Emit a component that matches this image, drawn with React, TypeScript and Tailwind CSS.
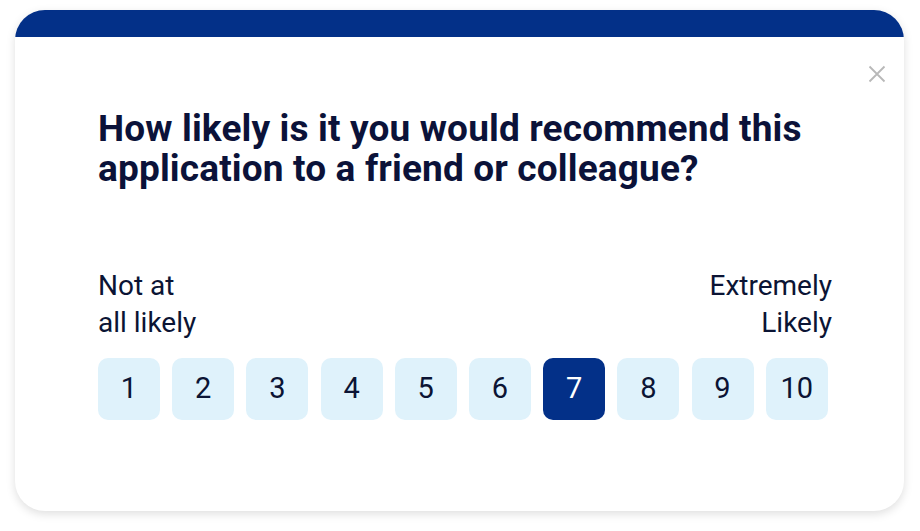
import {useState} from "react";

const scores = [1, 2, 3, 4, 5, 6, 7, 8, 9, 10];

function CloseIcon() {
    return (
        <svg width="18" height="18" viewBox="0 0 18 18" fill="none" stroke="#b8b8b8" strokeWidth="1.8">
            <path d="M1.5 1.5L16.5 16.5M16.5 1.5L1.5 16.5"/>
        </svg>
    );
}

function ScoreButton(props: { value: number, selected: boolean, onSelect: (v: number) => void }) {
    return (
        <button
            onClick={() => props.onSelect(props.value)}
            className={
                props.selected
                    ? "w-[62px] h-[62px] rounded-[10px] bg-[#033088] text-white text-[29px] flex items-center justify-center"
                    : "w-[62px] h-[62px] rounded-[10px] bg-[#dff2fb] text-[#0b1434] text-[29px] flex items-center justify-center"
            }
        >
            {props.value}
        </button>
    );
}

const App = () => {
    const [score, setScore] = useState(7);

    return (
        <div className="w-[920px] h-[531px] bg-white pt-[10px] px-[15px] font-['Roboto',sans-serif]">
            <div className="w-[889px] h-[501px] rounded-[30px] bg-white overflow-hidden shadow-[0_3px_10px_rgba(0,0,0,0.13)] flex flex-col">
                <div className="h-[27px] bg-[#033088] shrink-0"/>
                <div className="flex justify-end pt-[28px] pr-[18px]">
                    <button className="p-0">
                        <CloseIcon/>
                    </button>
                </div>
                <div className="pl-[83px] pr-[72px]">
                    <h1 className="mt-[26px] text-[37px] leading-[40px] font-bold tracking-[0.15px] text-[#0b1239]">
                        How likely is it you would recommend this<br/>
                        application to a friend or colleague?
                    </h1>
                    <div className="mt-[78px] flex justify-between text-[28px] leading-[37px] text-[#0b1434]">
                        <div>Not at<br/>all likely</div>
                        <div className="text-right">Extremely<br/>Likely</div>
                    </div>
                    <div className="mt-[17px] flex gap-[12.2px]">
                        {scores.map((s) => (
                            <ScoreButton key={s} value={s} selected={s === score} onSelect={setScore}/>
                        ))}
                    </div>
                </div>
            </div>
        </div>
    );
}

export default App;
